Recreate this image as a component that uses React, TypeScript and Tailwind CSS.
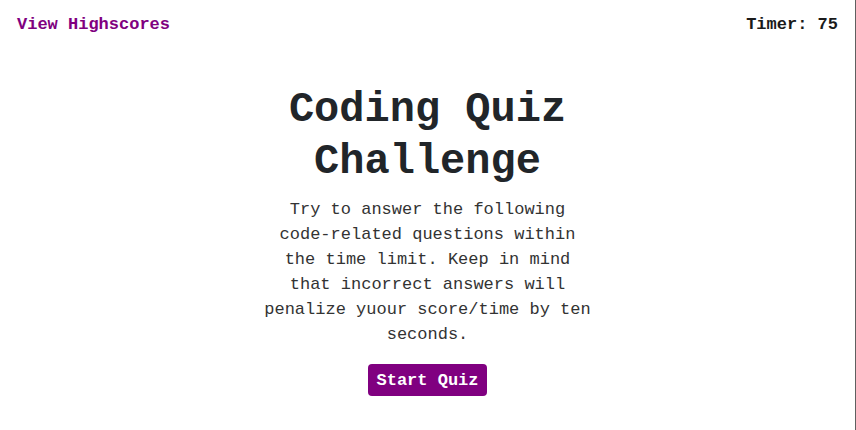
export default function App() {
  return (
    <div
      className="h-[430px] w-[856px] bg-white border-r border-[#606060] text-[#212529]"
      style={{ fontFamily: '"Liberation Mono", "Courier New", monospace' }}
    >
      <header className="flex h-[50px] items-center justify-between pl-[17px] pr-[17px] text-[17px] font-bold leading-[20px]">
        <a className="text-[#800080]">View Highscores</a>
        <span className="text-[#1a1a1a]">Timer: 75</span>
      </header>
      <main className="flex flex-col items-center pt-[34px]">
        <h1 className="w-[330px] text-center text-[42px] font-bold leading-[52px]">
          Coding Quiz Challenge
        </h1>
        <p className="mt-[10px] w-[330px] text-center text-[17px] leading-[24.9px] text-[#333]">
          Try to answer the following code-related questions within the time limit. Keep in mind that incorrect answers will penalize yuour score/time by ten seconds.
        </p>
        <button className="mt-[17px] h-[32px] rounded-[4px] bg-[#800080] px-[8px] text-[17px] font-bold text-white">
          Start Quiz
        </button>
      </main>
    </div>
  );
}
